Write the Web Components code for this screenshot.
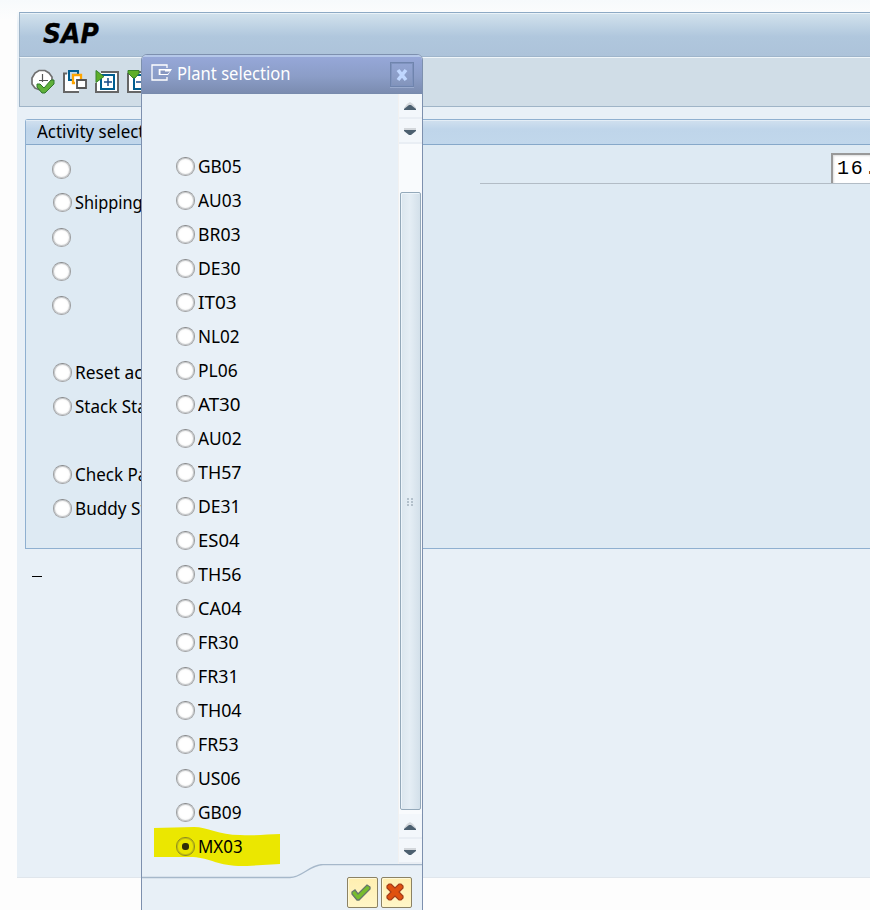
<!DOCTYPE html>
<html lang="en"><head><meta charset="utf-8"><title>SAP</title>
<style>html,body{margin:0;height:910px;width:870px;overflow:hidden;background:#fdfdfd}</style></head>
<body><sap-screen></sap-screen>
<script>
const define = (name, html, init) => customElements.define(name, class extends HTMLElement {
  constructor(){ super(); this.attachShadow({mode:'open'}).innerHTML = html; }
  connectedCallback(){ if(init) init(this, this.shadowRoot); }
});

define('ui-text', `<style>:host{display:block;white-space:pre;font:18px/22px "Noto Sans","DejaVu Sans",sans-serif}span{display:inline-block;transform-origin:0 0}</style><span></span>`, (el, root) => {
  const s = root.querySelector('span');
  s.textContent = el.getAttribute('text');
  const w = +el.getAttribute('fit');
  if (w) s.style.transform = `scaleX(${(w + .6) / s.getBoundingClientRect().width})`;
});

define('radio-row', `<style>
:host{display:flex;height:34px;align-items:center;gap:3px;box-sizing:border-box}
i{box-sizing:border-box;flex:none;width:19px;height:19px;border-radius:9px;border:1.5px solid #96989a;border-color:#8c8e90 #9fa1a3 #a6a8aa;background:#fff;box-shadow:inset 0 0 0 1px #c9cbcd,inset 0 0 3px #ccc;display:grid;place-items:center}
:host([selected]) i{background:#e8e500;border-color:#908d20;box-shadow:inset 0 0 0 1px #c2bf10}
:host([selected]) i::after{content:"";width:7px;height:7px;border-radius:3px;background:#302f08}
</style><i></i>`, (el, root) => {
  const t = el.getAttribute('label');
  if (t) { const x = document.createElement('ui-text'); x.setAttribute('text', t); if (el.hasAttribute('fit')) x.setAttribute('fit', el.getAttribute('fit')); root.append(x); }
});

define('tool-bar', `<style>:host{display:flex;height:50px;box-sizing:border-box;padding:11px 0 0 11px;background:#d0dde7;border-top:1px solid #f0f6fa;border-bottom:1px solid #9fb4c7;border-left:1px solid #9fb4c7;margin-left:2px;gap:7px}svg{flex:none}</style>
<svg width="25" height="26" viewBox="0 0 25 26"><path d="M8 1.500h6l4 2.500 3 4v7l-4 4-4 2H9l-5-2-3-4V9l3-5z" fill="#fff" stroke="#707070" stroke-width="1.7"/><path d="M11.500 5v8M8 11.500h9" stroke="#555" stroke-width="1.2"/><path d="M6 15h3l4 4 7-8h3v4l-9 9h-3l-5-6z" fill="#5fb03a" stroke="#2f762c" stroke-width="1"/></svg>
<svg width="25" height="26" viewBox="0 0 25 26"><path d="M1 5h8v8h7v10H1z" fill="#fff"/><path d="M4 4.500H1V23h15" fill="none" stroke="#666" stroke-width="2"/><path d="M9 11H6V2h9v4" fill="#bdd9ed" stroke="#005e91" stroke-width="2"/><path d="M12 14h-2V6h8v4" fill="#fff" stroke="#ffa500" stroke-width="2.3"/><path d="M14 11h9v8h-9z" fill="#fff" stroke="#555" stroke-width="1.8"/></svg>
<svg width="25" height="26" viewBox="0 0 25 26"><path d="M6 3h17v20H1V14" fill="#fff" stroke="#666" stroke-width="2"/><path d="M6 6h13v14H6z" fill="#fff" stroke="#005e91" stroke-width="2"/><path d="M9 13h8M13 9v8" stroke="#164b88" stroke-width="1.5"/><path d="M1 1.500l8 6-8 6z" fill="#5eae2a" stroke="#37832b"/></svg>
<svg width="25" height="26" viewBox="0 0 25 26"><path d="M11 3h13v20H1V4" fill="#fff" stroke="#666" stroke-width="2"/><path d="M7 6h13v14H7z" fill="#fff" stroke="#005e91" stroke-width="2"/><path d="M9 13h8" stroke="#164b88" stroke-width="1.5"/><path d="M1 1.500h11v3L8 9H6L1 4z" fill="#5eae2a" stroke="#37832b"/></svg>`);

define('title-bar', `<style>:host{display:flex;height:45px;box-sizing:border-box;border-top:1px solid #8da9c4;border-left:1px solid #9fb4c7;border-bottom:1px solid #9fb5cb;margin-left:2px;background:linear-gradient(#d2e2ed,#b0c7dd 55%,#adc3da);box-shadow:inset 0 1px #eaf2f8;padding:7px 0 0 23px}b{font:italic 700 26px/28px "DejaVu Sans Condensed","DejaVu Sans",sans-serif;transform:scaleX(1.07);transform-origin:0 0;-webkit-text-stroke:.3px #000}</style><b><slot></slot></b>`);

define('date-line', `<style>:host{display:flex;width:390px;height:31px;border-bottom:1px solid #b2bcc5;justify-content:flex-end;box-sizing:border-box}
div{width:39px;box-sizing:border-box;border:solid #999;border-width:2px 0 0 2px;background:#fff;padding-left:4px;font:20px/27px "Liberation Mono",monospace;letter-spacing:1.8px;box-shadow:inset 1px 1px 2px #ddd}</style><div><slot></slot></div>`);

define('group-box', `<style>
:host{display:block;margin:12px 0 0 8px;height:430px;box-sizing:border-box;border:solid #8fb0d0;border-width:1px 0 1px 1px;border-top-left-radius:3px;background:#deeaf3}
header{height:25px;box-sizing:border-box;border-top:1px solid #e3edf6;border-bottom:1px solid #86a8c9;background:linear-gradient(#cfdfee,#bfd5ea 35%,#c1d7eb);padding:0 0 0 11px}
header ui-text{margin-top:-1px}
main{display:grid;grid-template-columns:454px 390px;align-items:start}
section{padding:7px 0 0 26px}
radio-row[label]{padding:0 0 2px 1px}
.gap{height:34px} date-line{margin-top:8px}
</style><header><ui-text text="Activity selection" fit="132"></ui-text></header>
<main><section><radio-row></radio-row><radio-row label="Shipping" fit="67"></radio-row><radio-row></radio-row><radio-row></radio-row><radio-row></radio-row><div class="gap"></div><radio-row label="Reset activity" fit="106"></radio-row><radio-row label="Stack Status" fit="96"></radio-row><div class="gap"></div><radio-row label="Check Pallet" fit="96"></radio-row><radio-row label="Buddy Stack" fit="98"></radio-row></section>
<date-line>16.</date-line></main>`);

define('scroll-bar', `<style>
:host{display:flex;flex-direction:column;width:24px;height:770px;background:#f9fbfd;border-left:1px solid #f1f1f1;box-sizing:border-box}
.b{height:25px;flex:none;border-bottom:2px solid #e9eef4;box-sizing:border-box;background:#f3f7fb;display:grid;place-items:center;padding:2px 2px 0 0}
.track{flex:1;padding:48px 1px 4px;display:flex}
.thumb{flex:1;border:1px solid #94a9ba;border-radius:2px;background:linear-gradient(90deg,#dbe6ee,#e5eef5 45%,#d3e0ea);display:grid;place-items:center;box-shadow:inset 1px 1px #edf5fb;padding:2px 2px 0 0}
</style>
<div class="b"><svg width="14" height="10"><path d="M4 2L7 0l3 2 3 4v2H1V6z" fill="#d3d7db"/><path d="M1 8V7l5-4h2l5 4v1z" fill="#4c6070"/></svg></div>
<div class="b"><svg width="14" height="10"><path d="M1 1h12v3H1z" fill="#d3d7db"/><path d="M1 3h12v1L8 8H6L1 4z" fill="#4c6070"/></svg></div>
<div class="track"><div class="thumb"><svg width="8" height="9"><path d="M1 1h2M5 1h2M1 4h2M5 4h2M1 7h2M5 7h2" stroke="#a4b2be" stroke-width="1.3"/></svg></div></div>
<div class="b"><svg width="14" height="10"><path d="M4 2L7 0l3 2 3 4v2H1V6z" fill="#d3d7db"/><path d="M1 8V7l5-4h2l5 4v1z" fill="#4c6070"/></svg></div>
<div class="b"><svg width="14" height="10"><path d="M1 1h12v3H1z" fill="#d3d7db"/><path d="M1 3h12v1L8 8H6L1 4z" fill="#4c6070"/></svg></div>`);

define('action-button', `<style>:host{display:grid;place-items:center;width:31px;height:31px;box-sizing:border-box;border:1px solid #8b8264;border-radius:2px;background:linear-gradient(#ffefb0,#fff6c8);box-shadow:inset 1px 1px #fff8d8;padding:0 4px 1px 0}</style><slot></slot>`);

define('plant-dialog', `<style>
:host{display:flex;flex-direction:column;box-sizing:border-box;width:282px;height:870px;border:1px solid #7d90ae;border-radius:6px 6px 0 0;background:#e8f0f7;overflow:hidden}
header{height:39px;flex:none;box-sizing:border-box;border-top:2px solid #b5c8e9;border-bottom:1px solid #788bad;background:linear-gradient(#96a7d8,#8b9dc7 55%,#7b8cb0);display:flex;align-items:flex-start;padding:6px 8px 0 9px;color:#fff}
header>svg{margin-top:1px}
header ui-text{margin:-1px auto 0 3px}
.x{width:24px;height:25px;box-sizing:border-box;border:1px solid #6f84ad;box-shadow:inset 0 0 0 1px #7f93be,0 1px #99aacd;display:grid;place-items:center;margin-top:-1px}
main{display:flex;justify-content:space-between;height:770px;flex:none}
.list{position:relative;padding:55px 0 0 34px}
.mark{position:absolute;left:12px;top:733px}
.list radio-row{position:relative}
footer{position:relative;height:46px;flex:none;display:flex;justify-content:flex-end;gap:3px;padding:13px 10px 0 0;box-sizing:border-box}
.edge{position:absolute;left:0;top:0}
</style>
<header><svg width="23" height="18" viewBox="0 0 23 18"><path d="M16 4V1H1v15h15v-3" fill="none" stroke="#fff" stroke-width="1.3"/><path d="M7.700 5H21l-4 6H7.700z" fill="#fff"/><path d="M9.500 6.500h4.500v1h5L16.500 10h-7z" fill="#8797c0"/></svg><ui-text text="Plant selection" fit="113"></ui-text><div class="x"><svg width="14" height="14"><path d="M3 2l8 10M11 2L3 12" stroke="#c0d7ff" stroke-width="3.6"/></svg></div></header>
<main><div class="list"><svg class="mark" width="128" height="42"><path d="M0 1L40 0C53 0 65 8 86 8C102 9 113 7 126 7V37L93 39C65 40 57 31 39 30H0z" fill="#ebe700"/></svg></div><scroll-bar></scroll-bar></main>
<footer><svg class="edge" width="280" height="16"><path d="M0 13.500h148c12 0 20-13 33-13h99" fill="none" stroke="#a6b8ca" stroke-width="1.3"/></svg>
<action-button><svg width="22" height="20"><path d="M2 10l3-2 3 4 9-9 3 2v2L9 18H7l-5-6z" fill="#77bd2d" stroke="#66766b" stroke-width="1.3"/></svg></action-button>
<action-button><svg width="20" height="20"><path d="M2 4l2-2h2l4 4 4-4h2l2 2v2l-4 4 4 4v2l-2 2h-2l-4-4-4 4H4l-2-2v-2l4-4-4-4z" fill="#e0510f" stroke="#a33c19" stroke-width="1.2"/></svg></action-button></footer>`, (el, root) => {
  const list = root.querySelector('.list');
  'GB05 AU03 BR03 DE30 IT03 NL02 PL06 AT30 AU02 TH57 DE31 ES04 TH56 CA04 FR30 FR31 TH04 FR53 US06 GB09 MX03'.split(' ').forEach(p => {
    const r = document.createElement('radio-row');
    r.setAttribute('label', p);
    r.setAttribute('fit', {IT03:38,NL02:41,PL06:39,FR30:40,FR31:40,FR53:40,BR03:42,DE30:42,DE31:42,ES04:41,AT30:42,US06:42,MX03:44}[p] || 43);
    if (p === 'MX03') r.setAttribute('selected', '');
    list.append(r);
  });
});

define('sap-screen', `<style>
:host{display:block;width:870px;height:910px;overflow:hidden;position:relative;color:#000;background:linear-gradient(#f7fafc,#fdfdfd 20px)}
.win{margin:0 0 0 17px;box-sizing:border-box;height:866px;background:linear-gradient(#f7fafc,#e8f0f7 12px);border-bottom:1px solid #e0e6ec}
.shell{padding-top:12px}
.dash{width:10px;height:1px;background:#000;margin:27px 0 0 15px}
plant-dialog{position:absolute;left:141px;top:54px}
</style><div class="shell"><div class="win"><title-bar>SAP</title-bar><tool-bar></tool-bar><group-box></group-box><div class="dash"></div></div></div><plant-dialog></plant-dialog>`);
</script></body></html>
